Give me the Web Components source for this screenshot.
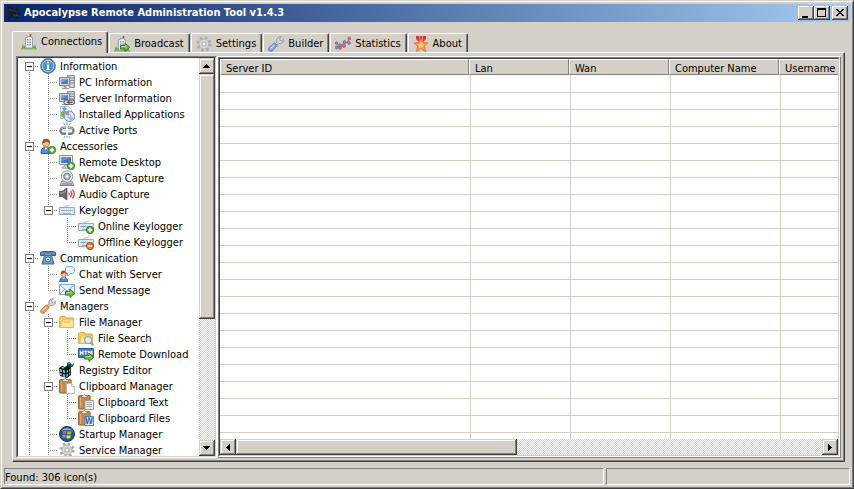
<!DOCTYPE html>
<html lang="en">
<head>
<meta charset="utf-8">
<meta name="viewport" content="width=device-width, initial-scale=1">
<title>Apocalypse Remote Administration Tool v1.4.3</title>
<style>
  :root {
    --face: #d4d0c8;
    --light: #fff;
    --shadow: #808080;
    --dark: #404040;
  }
  body {
    margin: 0;
    font: 11px/16px "DejaVu Sans Condensed", "DejaVu Sans", sans-serif;
    color: #000;
    cursor: default;
  }
</style>
</head>
<body>

<app-window>
  <title-bar slot="title">Apocalypse Remote Administration Tool v1.4.3</title-bar>

  <tab-strip slot="tabs">
    <tab-item icon="building" selected>Connections</tab-item>
    <tab-item icon="broadcast">Broadcast</tab-item>
    <tab-item icon="gear">Settings</tab-item>
    <tab-item icon="wrench-blue">Builder</tab-item>
    <tab-item icon="chart">Statistics</tab-item>
    <tab-item icon="medal">About</tab-item>
  </tab-strip>

  <tree-view>
    <tree-item first icon="info" label="Information">
      <tree-item icon="pc" label="PC Information"></tree-item>
      <tree-item icon="pc-link" label="Server Information"></tree-item>
      <tree-item icon="apps" label="Installed Applications"></tree-item>
      <tree-item icon="ports" label="Active Ports"></tree-item>
    </tree-item>
    <tree-item icon="user-add" label="Accessories">
      <tree-item icon="desktop" label="Remote Desktop"></tree-item>
      <tree-item icon="webcam" label="Webcam Capture"></tree-item>
      <tree-item icon="audio" label="Audio Capture"></tree-item>
      <tree-item icon="keyboard" label="Keylogger">
        <tree-item icon="keyboard-add" label="Online Keylogger"></tree-item>
        <tree-item icon="keyboard-del" label="Offline Keylogger"></tree-item>
      </tree-item>
    </tree-item>
    <tree-item icon="phone" label="Communication">
      <tree-item icon="chat" label="Chat with Server"></tree-item>
      <tree-item icon="mail" label="Send Message"></tree-item>
    </tree-item>
    <tree-item more icon="wrench-orange" label="Managers">
      <tree-item icon="folder" label="File Manager">
        <tree-item icon="folder-find" label="File Search"></tree-item>
        <tree-item icon="download" label="Remote Download"></tree-item>
      </tree-item>
      <tree-item icon="registry" label="Registry Editor"></tree-item>
      <tree-item icon="clip" label="Clipboard Manager">
        <tree-item icon="clip-text" label="Clipboard Text"></tree-item>
        <tree-item icon="clip-word" label="Clipboard Files"></tree-item>
      </tree-item>
      <tree-item icon="windows" label="Startup Manager"></tree-item>
      <tree-item more icon="gear" label="Service Manager"></tree-item>
    </tree-item>
  </tree-view>

  <server-list></server-list>

  <status-bar slot="status">Found: 306 icon(s)</status-bar>
</app-window>

<script>
"use strict";

// small pieces shared by several icons
const addBadge = `<circle cx="12" cy="12" r="3.7" fill="#5fa83a" stroke="#3b7a22" stroke-width=".8"/><path d="M12 9.8v4.4M9.8 12h4.4" stroke="#fff" stroke-width="1.5"/>`;
const delBadge = `<circle cx="12" cy="12" r="3.7" fill="#e8702a" stroke="#b8460f" stroke-width=".8"/><path d="M9.8 12h4.4" stroke="#fff" stroke-width="1.6"/>`;
const goArrow = `<path d="M6.5 9.5H11V7l4.7 4.3L11 15.6v-2.5H6.5z" fill="#74c043" stroke="#2f7d1c"/><path d="M7.5 10.5h4.3V9.3" stroke="#b6e58e"/>`;
const building = `<path d="M1 13l1-3 1 3 1-2v3h8v-3l1 2 1-3 1 3v2H1z" fill="#5aa83c"/><path d="M0 14h16v1.5H0z" fill="#7fb46a"/>
  <path d="M4.5 14V3.5h2v-1h4v1h1V14z" fill="#eef1f4" stroke="#99a0a6"/>
  <path d="M6 5h1.5v1.5H6zM8.5 5H10v1.5H8.5zM6 7.5h1.5V9H6zM8.5 7.5H10V9H8.5zM6 10h1.5v1.5H6zM8.5 10H10v1.5H8.5z" fill="#7f96ad"/>
  <path d="M9.5 1v2" stroke="#888"/><circle cx="9.5" cy="1" r="1" fill="#d93030"/>`;
const pc = `<path d="M8.5 1.5h7v12h-5z" fill="#d0d3d5" stroke="#888c90"/><path d="M11 4h4M11 6.5h4M11 9h4" stroke="#888c90"/>
  <path d="M.5 3.5h10v8H.5z" fill="#d8dbde" stroke="#7e8286"/><path d="M2 5h7v5H2z" fill="#4480cb"/><path d="M2 5h7L2 9z" fill="#6ea8e4"/>
  <path d="M3 14.5h7M5 12h2v2H5z" stroke="#9a9ea2" fill="#b8bbbe"/>`;
const keyboard = `<path d="M.5 5.5h15v7H.5z" fill="#d6e5f8" stroke="#8fadd2"/><path d="M5 5.5C5 3 11 5 11 2" stroke="#b5bcc4"/>
  <path d="M2 7.5h12M2 9.5h12" stroke="#fff" stroke-dasharray="1 1"/><path d="M2 8.5h12M4 11.5h8" stroke="#94b0d4"/>`;
const folder = `<path d="M.7 13.5v-10l1-1h4.5l1 1.5h7v9.5z" fill="#f7cf62" stroke="#dba632"/><path d="M3 6h11.5v7.3H1.8z" fill="#ffe79a" stroke="#e5b648" stroke-width=".7"/><path d="M5 8h7" stroke="#e5bb53"/>`;
const clipboard = `<rect x=".6" y="1.6" width="11.5" height="13.5" rx="1" fill="#c88a45" stroke="#97602a"/><path d="M2.5 3.5v10" stroke="#e0ae70"/><path d="M3.5 3.5v-2h1.7Q6.3-.8 7.5 1.5h1.7v2z" fill="#ececec" stroke="#8e7b5b" stroke-width=".8"/>`;
const person = `<path d="M1 15.5q-.5-5 3-6h4q3.5 1 3 6z" fill="#4b8ede" stroke="#245fae"/><path d="M4.5 9.5L6 12l1.7-2.5z" fill="#fff"/>
  <circle cx="6" cy="5.5" r="3.5" fill="#f3bd8b" stroke="#a76634" stroke-width=".7"/><path d="M2.3 5.5Q1.8 1 6 .8t4 4.4Q8 4.8 6.5 3.5 5 5 2.3 5.5z" fill="#9c5423"/>`;
const wrench = (light, dark) => `<path d="M9 6.2Q8 3.5 10 1.7 11.6.3 13.5.8l-1.9 2 .4 1.7 1.7.4L15.600 3q.5 2-1 3.500-1.700 1.600-4 1L8.900 9 7 7.500z" fill="#d3d6d9" stroke="#898e93" stroke-width=".8"/>
  <path d="M6.600 6.900l2.500 2.500-4.700 5.300q-1.500 1.300-3.100.1-1.500-1.700 0-3.300z" fill="${light}" stroke="${dark}" stroke-width=".9"/><path d="M6.300 9l-3.900 3.500" stroke="#fff" stroke-opacity=".6" stroke-width="1.300"/>`;
// lettering on icons
const mark = (x, y, size, color, text) => `<text x="${x}" y="${y}" fill="${color}" font-size="${size}" font-weight="bold" text-anchor="middle">${text}</text>`;

const icons = {
  dragon: `<path d="M1 3q3-3 6 0l2-1-1 2q4 0 5-3 0 4-3 5 4 1 4 4l-2-2q-2 0-3 2 2 3 5 2-3 3-6 1-2-2-4 0l-2 2q0-4 3-5-4-1-4-4l3 2q1-3-3-5z" fill="#171b24"/><path d="M3 4l3 2 3-1M7 10l2 1 3-1M9 6l2 2" stroke="#56524c" stroke-width=".7"/>`,
  building,
  broadcast: building + goArrow,
  gear: `<circle cx="8" cy="8" r="6.3" stroke="#a8a8a8" stroke-width="2.6" stroke-dasharray="2.5 2.45"/><circle cx="8" cy="8" r="5" fill="#dedede" stroke="#b0b0b0"/><circle cx="8" cy="8" r="3.3" fill="#cbcbcb"/><circle cx="8" cy="8" r="1.9" fill="#fff" stroke="#999" stroke-width=".7"/>`,
  "wrench-blue": wrench("#7fabe8", "#4b76bd"),
  "wrench-orange": wrench("#f7975b", "#d66a34"),
  chart: `<path d="M1 11l4-1 4-3 5-1" stroke="#5484cc"/><path d="M1 7l4 4 4-1.500L14.500 3" stroke="#ec5656"/>
    <g fill="#6fa0e2" stroke="#3f6db4" stroke-width=".7"><circle cx="1.700" cy="11.500" r="1.400"/><circle cx="5" cy="9" r="1.300"/><circle cx="9.500" cy="6" r="1.400"/><circle cx="14" cy="7" r="1.400"/></g>
    <g fill="#ff7272" stroke="#c93636" stroke-width=".7"><circle cx="1.500" cy="7" r="1.300"/><circle cx="5" cy="12" r="1.400"/><circle cx="9" cy="10" r="1.400"/><circle cx="14.300" cy="2.500" r="1.400"/></g>`,
  medal: `<path d="M3 0h10v3l-3 3H6L3 3z" fill="#e3313e"/><path d="M6.200 0h1v5h-1zM9 0h1v5H9z" fill="#ff9a9a"/><path d="M8 2.500l2 4 5 .5-3.700 3.200 1.300 5.300L8 12.700l-4.600 2.800 1.300-5.300L1 7l5-.5z" fill="#ff9b4c" stroke="#e2642c" stroke-width=".8"/><path d="M8 5.500l1.200 3 2.300.2-2 1.600.4 2L8 11l-2 1.300.5-2-2-1.600 2.400-.2z" fill="#ffc985"/>`,
  info: `<circle cx="8" cy="8" r="7.400" fill="#3d78b6" stroke="#6b8db0"/><circle cx="8" cy="8" r="5.700" fill="#4f92d2" stroke="#cfe2f4" stroke-width=".8"/><circle cx="8" cy="4.600" r="1.100" fill="#fff"/><rect x="7" y="6.500" width="2" height="5" fill="#fff"/><rect x="6" y="11" width="4" height="1" fill="#fff"/>`,
  pc,
  "pc-link": pc + `<rect x="5" y="10" width="6" height="4.500" rx="2" fill="#ddd" stroke="#555"/><rect x="9.500" y="10" width="6" height="4.500" rx="2" fill="#ccc" stroke="#555"/><path d="M7.500 12.300h6" stroke="#444"/>`,
  apps: `<path d="M1.500.5h8l3 3v9h-11z" fill="#f8fafc" stroke="#b5c4d2"/><path d="M2 6l3-2 3 2v4L5 12l-3-2z" fill="#73bf46"/><path d="M2.500 2L6 1l2 2-3 2z" fill="#4fa5dc"/>
    <circle cx="10.300" cy="10.300" r="5.200" fill="#dce5f8" stroke="#7d88bd"/><path d="M10.300 10.300L6 8q1-2.500 4-3z" fill="#9b8ce4"/><path d="M10.300 10.300l4.600 2q-1.300 3-4 3z" fill="#77c8ee"/><circle cx="10.300" cy="10.300" r="1.500" fill="#fff" stroke="#8c95bd" stroke-width=".7"/>`,
  ports: `<path d="M7 5.700H4.500a3 3 0 000 6H7M9 5.700h2.500a3 3 0 010 6H9" stroke="#7a7e81" stroke-width="2.400"/><path d="M6.500 5.700h-2a3 3 0 00-2.300 1.500M9.500 5.700h2a3 3 0 012.300 1.500M5 8.700h2M9 8.700h2" stroke="#c7cacc"/><path d="M8 0v3M4.500 1l1.700 2.500M11.500 1L9.800 3.500M8 14v2M5 16l1-2M11 16l-1-2" stroke="#66a8e8"/>`,
  "user-add": person + addBadge,
  desktop: `<path d="M.5 1.500h13v9H.5z" fill="#ecedee" stroke="#8b9094"/><path d="M2 3h10v6H2z" fill="#4177c4"/><path d="M2 3h10L2 8z" fill="#6097dc"/><path d="M5 11h4v2h2v1.500H3V13h2z" fill="#c4c7ca" stroke="#999" stroke-width=".6"/>` + addBadge,
  webcam: `<path d="M3 11h10l2 4.500H1z" fill="#c9ccce" stroke="#85898c"/><circle cx="8" cy="6.500" r="5.700" fill="#eceeef" stroke="#95999c"/><circle cx="8" cy="6.500" r="3.300" fill="#a9bccb" stroke="#707b84"/><circle cx="8" cy="6.500" r="1.300" fill="#fff"/><path d="M3 14h10" stroke="#777"/>`,
  audio: `<path d="M0 5.500h3L8 2v12l-5-3.500H0z" fill="#66696c" stroke="#484b4d" stroke-width=".7"/><path d="M1 7h3l3-2" stroke="#aaa"/><path d="M9.500 6l2 2-2 2z" fill="#f04c52"/><path d="M11.500 5q2.500 3 0 6M13.500 3.500q3.500 4.500 0 9" stroke="#e6434c" stroke-width="1.400"/>`,
  keyboard,
  "keyboard-add": keyboard + addBadge,
  "keyboard-del": keyboard + delBadge,
  phone: `<path d="M.5 5.500v-3l2-1h11l2 1v3h-4V4h-7v1.500z" fill="#5989bd" stroke="#345f91"/><path d="M4.500 5.500h7l2.500 8.500H2z" fill="#729fce" stroke="#3a6799"/><circle cx="8" cy="9.500" r="2.500" fill="#d9e8f7" stroke="#42709f"/><circle cx="8" cy="9.500" r=".8" fill="#42709f"/>`,
  chat: `<g transform="translate(0 4) scale(.78)">${person}</g><path d="M8 .7h5.500l2 1.600v3.500L13.500 7.500h-2L8.700 10V7.500L6.500 6V2z" fill="#e7f1fe" stroke="#6f9bd0" stroke-width=".9"/>`,
  mail: `<path d="M.5 2.500h15v10H.5z" fill="#edf5fe" stroke="#7fa8d8"/><path d="M.8 3L8 9l7.200-6M1 12l5-5M15 12l-5-5" stroke="#7fa8d8"/>` + goArrow,
  folder,
  "folder-find": folder + `<path d="M12.300 12.300l3 3" stroke="#8c9bab" stroke-width="2"/><circle cx="10.200" cy="10" r="3.500" fill="#d4ecfd" fill-opacity=".9" stroke="#93a4b3" stroke-width="1.200"/>`,
  download: `<path d="M.5 2.500h15v9H.5z" fill="#3877c5" stroke="#275b9e"/>` + mark(8, 9, 6, "#fff", "HTM") + goArrow,
  registry: `<path d="M0 6l3-2 3 1 3-2 3 2v8l-4 3-7-2z" fill="#111"/><path d="M1 7l2 .6V10l-2-.5zM4 8l2 .6V11l-2-.6zM1 11l2 .6v2L1 13zM4 12l2 .6V15l-2-.5zM7.500 9L9 8v2l-1.500 1zM10 7.500l1.300-.8V9L10 9.800zM7.500 12.500L9 11.700V14l-1.500 1zM10 11l1.300-.8v2l-1.300 1zM2 5.800l2-1 2 1-2 1z" fill="#52d4da"/><path d="M8 1l3-1 1 2 3-.5-1 3-3 1-3-1z" fill="#163b43"/><path d="M9 2l2-.8M12 3l2-.5" stroke="#52d4da"/>`,
  clip: clipboard + `<path d="M7.500 5.500h5l3 3v7h-8z" fill="#fff" stroke="#aeb2b5" stroke-width=".8"/><path d="M12.500 5.500v3h3" stroke="#aeb2b5" stroke-width=".8"/>`,
  "clip-text": clipboard + `<path d="M7 6.500h8.500v9H7z" fill="#f2f2f2" stroke="#8f9397" stroke-width=".9"/><path d="M8.500 8.500H14M8.500 10.500H14M8.500 12.500H14" stroke="#9b9fa3"/>`,
  "clip-word": clipboard + `<path d="M7 6.500h8.500v9H7z" fill="#e3edfb" stroke="#4775bd" stroke-width=".9"/>` + mark(11, 14, 8, "#3564b6", "W"),
  windows: `<circle cx="8" cy="8" r="7.500" fill="#28568b" stroke="#173555"/><path d="M2 5q6-6 12 0-5-2-12 0z" fill="#8cb7d9"/><path d="M4 5q2-1 3.500 0L7 8q-2-1-3.500 0z" fill="#ed592b"/><path d="M8.500 5q2 1 4 0L12 8q-2 1-4 0z" fill="#8cc63f"/><path d="M3.400 9q2-1 3.500 0l-.6 3Q4.500 11 3 12z" fill="#48a8e8"/><path d="M7.800 9q2 1 4 0l-.6 3q-2 1-4 0z" fill="#ffd13d"/>`
};

function define(name, html, setup) {
  const template = document.createElement("template");
  template.innerHTML = html;
  customElements.define(name, class extends HTMLElement {
    constructor() {
      super();
      this.attachShadow({ mode: "open" }).appendChild(template.content.cloneNode(true));
    }
    connectedCallback() {
      if (setup) setup(this, this.shadowRoot);
    }
  });
}

class AppIcon extends HTMLElement {
  static observedAttributes = ["name"];

  constructor() {
    super();
    this.attachShadow({ mode: "open" }).innerHTML = `
      <style>
        :host { display: block; flex: none; width: 16px; height: 16px; }
        svg { display: block; }
      </style>
      <svg width="16" height="16" viewBox="0 0 16 16" fill="none" aria-hidden="true"></svg>
    `;
  }

  attributeChangedCallback(attribute, oldName, name) {
    this.shadowRoot.querySelector("svg").innerHTML = icons[name] || "";
  }
}

customElements.define("app-icon", AppIcon);

define("scroll-bar", `
  <style>
    :host {
      display: flex; flex: none; flex-direction: column; width: 16px;
      background: repeating-conic-gradient(#fff 0 25%, var(--face) 0 50%) 0 0 / 2px 2px;
    }
    :host([horizontal]) { flex-direction: row; width: auto; height: 16px; }
    button, .thumb {
      box-sizing: border-box; padding: 0; border: 0; background: var(--face);
      box-shadow: inset -1px -1px var(--dark), inset 1px 1px var(--face),
        inset -2px -2px var(--shadow), inset 2px 2px var(--light);
    }
    button { display: grid; place-items: center; flex: none; width: 16px; height: 16px; }
    .track { flex: 1; display: flex; flex-direction: inherit; min-width: 0; min-height: 0; }
    .thumb { flex: 0 0 var(--share, 50%); }
    svg { display: block; }
    :host([horizontal]) svg { transform: rotate(-90deg); }
  </style>
  <button type="button" aria-label="Scroll back"><svg width="8" height="8" shape-rendering="crispEdges"><path d="M3 2h1v1h1v1h1v1h1v1H0V5h1V4h1V3h1z"/></svg></button>
  <div class="track"><div class="thumb"></div></div>
  <button type="button" aria-label="Scroll on"><svg width="8" height="8" shape-rendering="crispEdges"><path d="M0 2h7v1H6v1H5v1H4v1H3V5H2V4H1V3H0z"/></svg></button>
`);

define("title-bar", `
  <style>
    :host {
      display: flex; align-items: center; height: 18px; padding: 0 2px; gap: 2px;
      color: #fff; font-weight: bold;
      background: linear-gradient(90deg, #0a246a, #a6caf0);
    }
    .text { flex: 1; overflow: hidden; line-height: 18px; white-space: nowrap; }
    .buttons { display: flex; }
    button {
      width: 16px; height: 14px; padding: 0; border: 0; background: var(--face);
      box-shadow: inset -1px -1px var(--dark), inset 1px 1px var(--light), inset -2px -2px var(--shadow);
    }
    button:last-child { margin-left: 2px; }
    svg { display: block; }
  </style>
  <app-icon name="dragon"></app-icon>
  <div class="text"><slot></slot></div>
  <div class="buttons">
    <button type="button" aria-label="Minimize"><svg width="16" height="14" shape-rendering="crispEdges"><path d="M4 10h6v2H4z"/></svg></button>
    <button type="button" aria-label="Maximize"><svg width="16" height="14" shape-rendering="crispEdges"><path d="M3 2h9v9H3zM4 4v6h7V4z" fill-rule="evenodd"/></svg></button>
    <button type="button" aria-label="Close"><svg width="16" height="14" shape-rendering="crispEdges"><path d="M4 3h2v1h1v1h2V4h1V3h2v1h-1v1h-1v1H9v1h1v1h1v1h1v1h-2V9H9V8H7v1H6v1H4V9h1V8h1V7h1V6H6V5H5V4H4z"/></svg></button>
  </div>
`);

define("tab-item", `
  <style>
    :host { display: block; }
    button {
      display: flex; align-items: center; gap: 4px; height: 19px; padding: 2px 5px 0 4px;
      font: inherit; line-height: 18px; color: inherit; background: var(--face);
      border: 1px solid var(--light); border-bottom: 0;
      border-right: 1px solid var(--dark); border-radius: 2px 2px 0 0;
      box-shadow: inset -1px 0 var(--shadow);
    }
    /* the selected tab covers the top edge of the page below it */
    :host([selected]) button { position: relative; height: 22px; margin-bottom: -1px; padding: 0 5px 1px 8px; }
  </style>
  <button type="button" role="tab"><app-icon></app-icon><slot></slot></button>
`, (host, root) => {
  root.querySelector("app-icon").setAttribute("name", host.getAttribute("icon"));
  root.querySelector("button").setAttribute("aria-selected", host.hasAttribute("selected"));
});

define("tab-strip", `
  <style>
    :host { display: flex; align-items: flex-end; gap: 1px; height: 21px; }
  </style>
  <slot></slot>
`, (host) => host.setAttribute("role", "tablist"));

define("tree-item", `
  <style>
    :host {
      display: grid; grid-template-columns: 19px 1fr;
      --dots-v: repeating-linear-gradient(var(--shadow) 0 1px, transparent 1px 2px);
      --dots-h: repeating-linear-gradient(90deg, var(--shadow) 0 1px, transparent 1px 2px);
    }
    .guide {
      grid-row: 1 / 3; padding: 4px 5px;
      background: var(--dots-v) 9px 0 / 1px 100% no-repeat, var(--dots-h) 9px 8px / 10px 1px no-repeat;
    }
    :host([first]) .guide { background-position: 9px 8px, 9px 8px; }
    :host(:last-child:not([more])) .guide { background-size: 1px 8px, 10px 1px; }
    button {
      display: block; width: 9px; height: 9px; padding: 0;
      border: 1px solid var(--shadow);
      background: linear-gradient(#000, #000) center / 5px 1px no-repeat #fff;
    }
    .row { display: flex; gap: 4px; height: 16px; padding-left: 1px; line-height: 18px; white-space: nowrap; }
    .children { grid-column: 2; }
  </style>
  <div class="guide"><button type="button" aria-label="Collapse"></button></div>
  <div class="row"><app-icon></app-icon><span></span></div>
  <div class="children"><slot></slot></div>
`, (host, root) => {
  host.setAttribute("role", "treeitem");
  root.querySelector("app-icon").setAttribute("name", host.getAttribute("icon"));
  root.querySelector("span").textContent = host.getAttribute("label");
  const toggle = root.querySelector("button");
  if (!host.querySelector("tree-item")) {
    toggle.remove();
    return;
  }
  toggle.addEventListener("click", () => {
    const children = root.querySelector(".children");
    children.hidden = !children.hidden;
  });
});

define("tree-view", `
  <style>
    :host {
      display: flex; flex: none; box-sizing: border-box; width: 201px; background: #fff;
      border: 1px solid; border-color: var(--shadow) var(--light) var(--light) var(--shadow);
    }
    .inner {
      flex: 1; display: flex; min-width: 0; border: 1px solid;
      border-color: var(--dark) var(--face) var(--face) var(--dark);
    }
    .items { flex: 1; min-width: 0; padding-left: 2px; overflow: hidden; }
    scroll-bar { --share: 67%; }
  </style>
  <div class="inner">
    <div class="items" role="tree"><slot></slot></div>
    <scroll-bar></scroll-bar>
  </div>
`);

define("server-list", `
  <style>
    :host {
      display: flex; flex: 1; min-width: 0; border: 1px solid;
      border-color: var(--light) var(--shadow) var(--shadow) var(--light);
    }
    .sunken, .inner { flex: 1; display: flex; min-width: 0; border: 1px solid; }
    .sunken { border-color: var(--shadow) var(--light) var(--light) var(--shadow); }
    .inner {
      flex-direction: column; background: #fff;
      border-color: var(--dark) var(--face) var(--face) var(--dark);
    }
    .body { flex: 1; min-height: 0; overflow: hidden; }
    table { width: 1279px; table-layout: fixed; border-collapse: separate; border-spacing: 0; }
    th {
      box-sizing: border-box; height: 16px; padding: 3px 5px 0; line-height: 11px;
      font-weight: normal; text-align: left; white-space: nowrap; background: var(--face);
      border: 1px solid; border-color: var(--light) var(--shadow) var(--shadow) var(--light);
    }
    td {
      box-sizing: border-box; height: 17px; padding: 0; border-bottom: 1px solid var(--face);
      background: linear-gradient(var(--face), var(--face)) 1px 0 / 1px 100% no-repeat;
    }
    td:first-child { background: none; }
    tbody tr:first-child td { height: 18px; }
    scroll-bar { --share: 48%; }
  </style>
  <div class="sunken"><div class="inner">
    <div class="body">
      <table>
        <colgroup><col style="width:249px"><col style="width:100px"><col style="width:100px"><col style="width:110px"><col></colgroup>
        <thead><tr><th>Server ID</th><th>Lan</th><th>Wan</th><th>Computer Name</th><th>Username</th></tr></thead>
        <tbody></tbody>
      </table>
    </div>
    <scroll-bar horizontal></scroll-bar>
  </div></div>
`, (host, root) => {
  // no servers connected: only the empty grid is drawn
  const columns = root.querySelectorAll("th").length;
  root.querySelector("tbody").innerHTML = `<tr>${"<td></td>".repeat(columns)}</tr>`.repeat(60);
});

define("status-bar", `
  <style>
    :host { display: flex; gap: 2px; line-height: 17px; }
    div {
      flex: 0 1 244px; box-sizing: border-box; height: 17px; border: 1px solid;
      border-color: var(--shadow) var(--light) var(--light) var(--shadow);
      white-space: nowrap;
    }
    .message { flex: 1; }
  </style>
  <div class="message" role="status"><slot></slot></div>
  <div></div>
`);

define("app-window", `
  <style>
    :host {
      display: flex; box-sizing: border-box; height: 100vh; background: var(--face);
      border: 1px solid; border-color: var(--face) var(--dark) var(--dark) var(--face);
    }
    .frame {
      flex: 1; display: flex; flex-direction: column; min-width: 0; padding: 2px; border: 1px solid;
      border-color: var(--light) var(--shadow) var(--shadow) var(--light);
    }
    .main { flex: 1; display: flex; flex-direction: column; min-height: 0; padding: 9px 5px 6px 8px; }
    .page-edge {
      flex: 1; display: flex; min-height: 0; border: 1px solid;
      border-color: var(--light) var(--dark) var(--dark) var(--light);
    }
    .page {
      flex: 1; display: flex; min-width: 0; padding: 3px 2px 2px 3px;
      border: 0 solid var(--shadow); border-width: 0 1px 1px 0;
    }
  </style>
  <div class="frame">
    <slot name="title"></slot>
    <div class="main">
      <slot name="tabs"></slot>
      <div class="page-edge"><div class="page"><slot></slot></div></div>
    </div>
    <slot name="status"></slot>
  </div>
`);
</script>
</body>
</html>
